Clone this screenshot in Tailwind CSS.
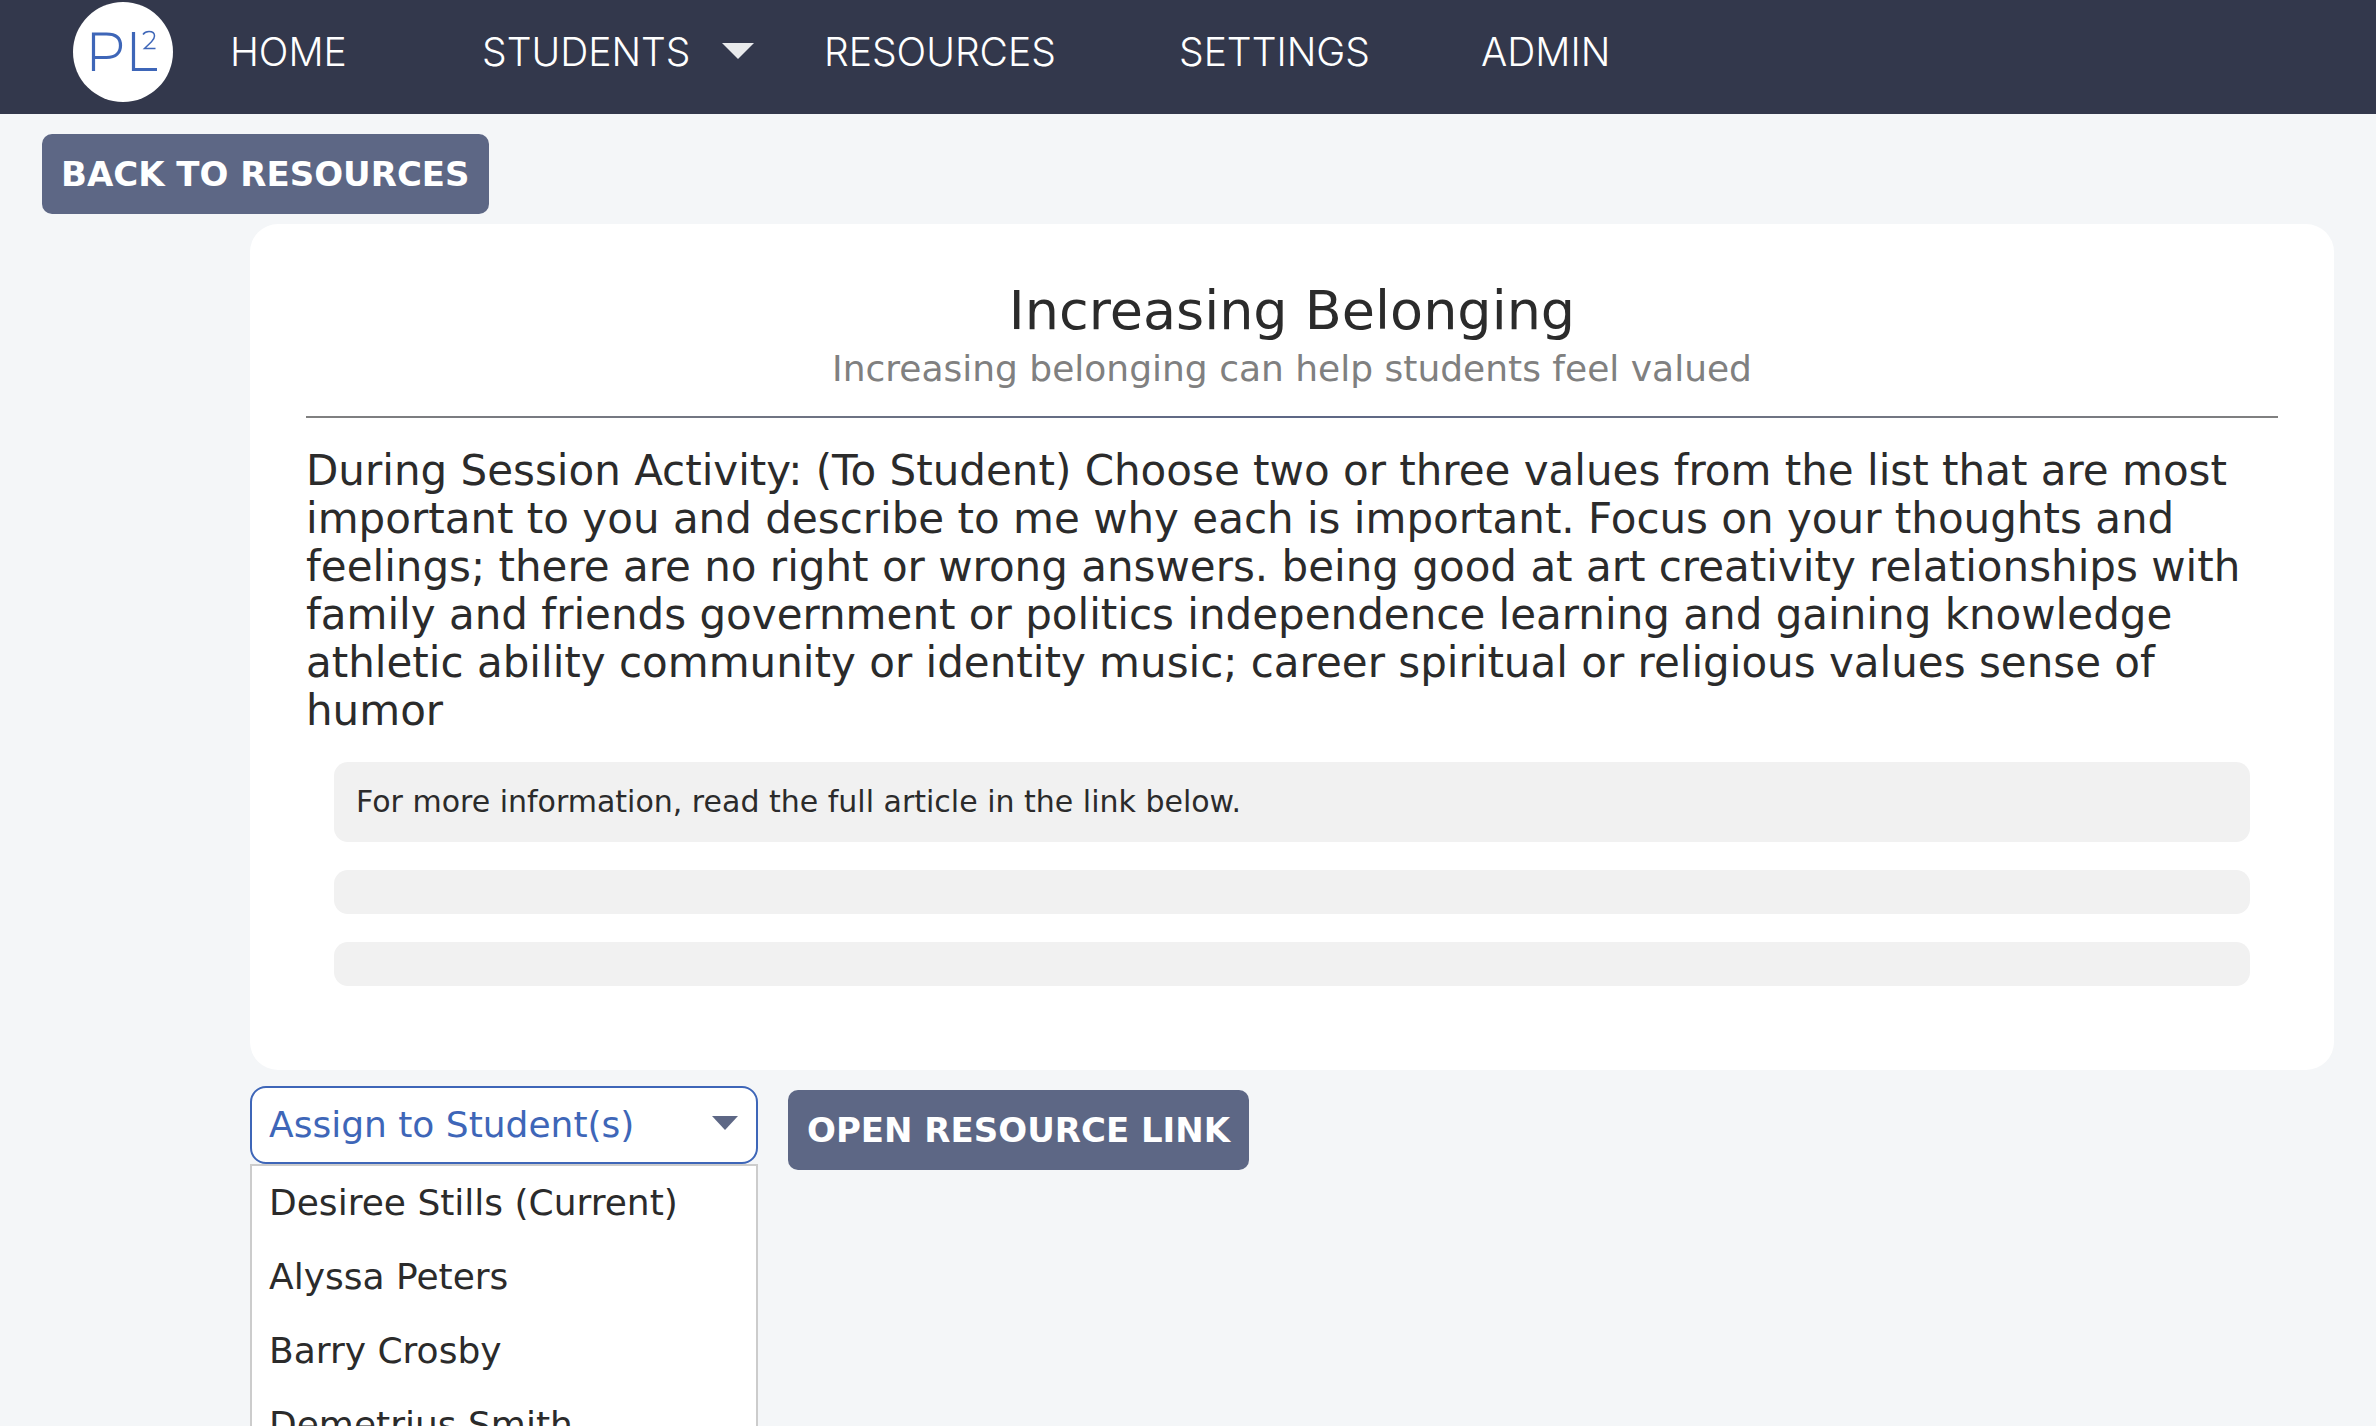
<!DOCTYPE html>
<html lang="en">
<head>
<meta charset="utf-8">
<meta name="viewport" content="width=device-width, initial-scale=1">
<title>Increasing Belonging</title>
<script src="https://cdn.jsdelivr.net/npm/@tailwindcss/browser@4"></script>
</head>
<body class="h-screen overflow-hidden bg-[#f4f6f8] font-['DejaVu_Sans',sans-serif] text-[#2b2b2b]">
<header class="flex h-[114px] items-start bg-[#33384c] pl-[73px] pt-0.5">
  <a href="#" aria-label="PL2 home" class="size-[100px] shrink-0">
    <svg viewBox="0 0 100 100" class="size-full" fill="none" stroke="#3e66b8">
      <circle cx="50" cy="50" r="50" fill="#fff" stroke="none"/>
      <path d="M20.500 69V32H33.500C43 32 47.500 36.500 47.500 43.500S43 55.500 33.500 55.500H20.500" stroke-width="3.200"/>
      <path d="M60.500 30V67.500H84" stroke-width="3.200"/>
      <path d="M70 32.500C71.500 30.300 73.500 29.500 76 29.500C79.400 29.500 81.500 31.200 81.500 34C81.500 36.200 80.500 37.700 78.500 39.700L71.500 46.500H82.500" stroke-width="1.500"/>
    </svg>
  </a>
  <nav class="ml-[57px] grid h-[98px] grid-cols-[252px_342px_355px_302px_auto] items-center font-['Inter',sans-serif] text-[39px] font-light leading-none text-white">
    <a href="#">HOME</a>
    <div class="flex items-center gap-8">
      <a href="#">STUDENTS</a>
      <button type="button" aria-label="Open students menu" class="block">
        <svg viewBox="0 0 32 16" class="h-4 w-8" fill="#e9eaec"><path d="M0 0H32L16 16Z"/></svg>
      </button>
    </div>
    <a href="#">RESOURCES</a>
    <a href="#">SETTINGS</a>
    <a href="#">ADMIN</a>
  </nav>
</header>

<main class="px-[42px] pt-5">
  <button type="button" class="block h-20 rounded-[10px] bg-[#5d6785] px-[19px] text-[34px] font-semibold leading-none text-white">BACK TO RESOURCES</button>

  <div class="pl-[208px] pt-2.5">
    <article class="rounded-[28px] bg-white px-14 pb-[84px] pt-[55px]">
      <h1 class="text-center text-[54px] leading-[64px]">Increasing Belonging</h1>
      <p class="mt-1 text-center text-[36px] leading-[44px] text-[#808080]">Increasing belonging can help students feel valued</p>
      <div class="mt-[25px] h-0.5 bg-linear-to-r/srgb from-[#808080] via-[#5d6785] to-[#808080]"></div>
      <p class="mt-[29px] text-[42px] leading-[48px]">During Session Activity: (To Student) Choose two or three values from the list that are most important to you and describe to me why each is important. Focus on your thoughts and feelings; there are no right or wrong answers. being good at art creativity relationships with family and friends government or politics independence learning and gaining knowledge athletic ability community or identity music; career spiritual or religious values sense of humor</p>
      <div class="mx-7 mt-[27px] flex flex-col gap-7">
        <p class="rounded-[14px] bg-[#f1f1f1] px-[22px] py-[22px] text-[30px] leading-9">For more information, read the full article in the link below.</p>
        <div class="h-11 rounded-[14px] bg-[#f1f1f1]"></div>
        <div class="h-11 rounded-[14px] bg-[#f1f1f1]"></div>
      </div>
    </article>

    <div class="mt-4 flex items-start gap-[30px]">
      <div class="relative w-[508px] text-[36px]">
        <select aria-label="Assign to Student(s)" class="block h-[78px] w-full appearance-none rounded-2xl border-2 border-[#3e66b8] bg-white px-[17px] leading-[48px] text-[#3e66b8]">
          <option>Assign to Student(s)</option>
        </select>
        <svg viewBox="0 0 26 14" class="pointer-events-none absolute right-5 top-[30px] h-3.5 w-[26px]" fill="#5d6785"><path d="M0 0H26L13 14Z"/></svg>
        <ul role="listbox" aria-label="Students" class="absolute inset-x-0 top-full border-2 border-[#ccc] bg-white">
          <li role="option" class="px-[17px] py-[15px] leading-[44px]">Desiree Stills (Current)</li>
          <li role="option" class="px-[17px] py-[15px] leading-[44px]">Alyssa Peters</li>
          <li role="option" class="px-[17px] py-[15px] leading-[44px]">Barry Crosby</li>
          <li role="option" class="px-[17px] py-[15px] leading-[44px]">Demetrius Smith</li>
        </ul>
      </div>
      <button type="button" class="mt-1 h-20 rounded-[10px] bg-[#5d6785] px-[19px] text-[34px] font-semibold leading-none text-white">OPEN RESOURCE LINK</button>
    </div>
  </div>
</main>
</body>
</html>
